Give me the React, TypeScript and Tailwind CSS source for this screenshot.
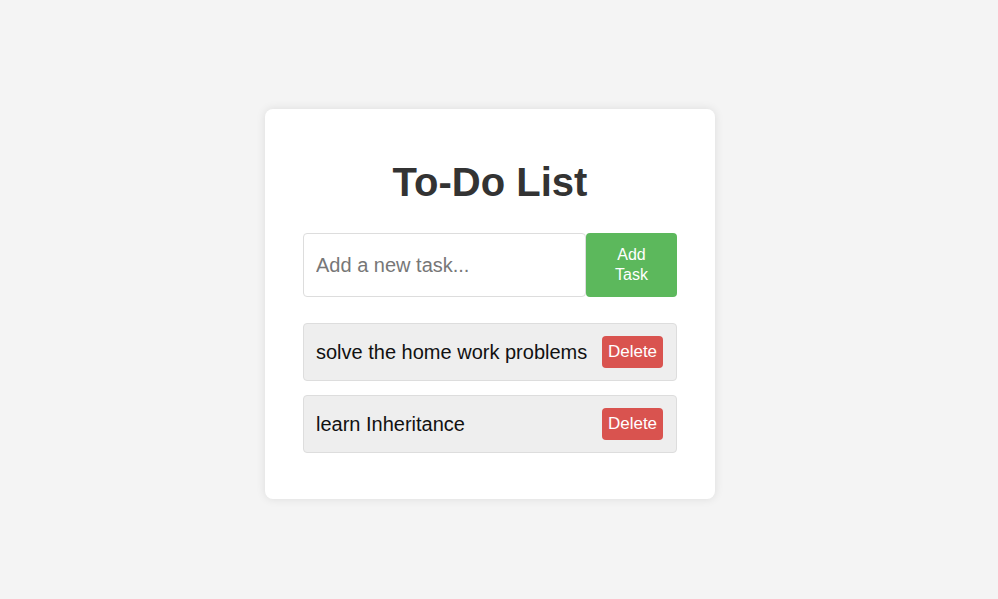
import { useState } from "react";

export default function App() {
    const [tasks, setTasks] = useState<string[]>(["solve the home work problems", "learn Inheritance"]);
    const [text, setText] = useState("");

    const add = () => {
        if (!text.trim()) return;
        setTasks([...tasks, text.trim()]);
        setText("");
    };

    return (
        <div className="min-h-screen bg-[#f4f4f4] pr-[18px] pt-[109px] font-['Liberation_Sans',Arial,sans-serif]">
            <div className="mx-auto w-[450px] rounded-lg bg-white px-[38px] pb-[46px] pt-[50px] shadow-[0_0_10px_rgba(0,0,0,0.1)]">
                <h1 className="text-center text-[40px] font-bold leading-[46px] text-[#333]">To-Do List</h1>

                <div className="mt-[28px] flex">
                    <input
                        value={text}
                        onChange={(e) => setText(e.target.value)}
                        placeholder="Add a new task..."
                        className="h-16 w-[283px] rounded border border-[#ddd] px-3 text-[20px] text-[#111] outline-none placeholder:text-[#777]"
                    />
                    <button
                        onClick={add}
                        className="h-16 w-[92px] rounded bg-[#5cb85c] px-4 text-[16px] leading-[20px] text-white"
                    >
                        Add Task
                    </button>
                </div>

                <ul className="mt-[26px] flex flex-col gap-[14px]">
                    {tasks.map((t, i) => (
                        <li
                            key={i}
                            className="flex h-[58px] items-center justify-between rounded border border-[#ddd] bg-[#eee] pl-3 pr-[13px] text-[20px] text-[#111]"
                        >
                            <span>{t}</span>
                            <button
                                onClick={() => setTasks(tasks.filter((_, j) => j !== i))}
                                className="h-8 w-[61px] rounded bg-[#d9534f] text-[17px] text-white"
                            >
                                Delete
                            </button>
                        </li>
                    ))}
                </ul>
            </div>
        </div>
    );
}
